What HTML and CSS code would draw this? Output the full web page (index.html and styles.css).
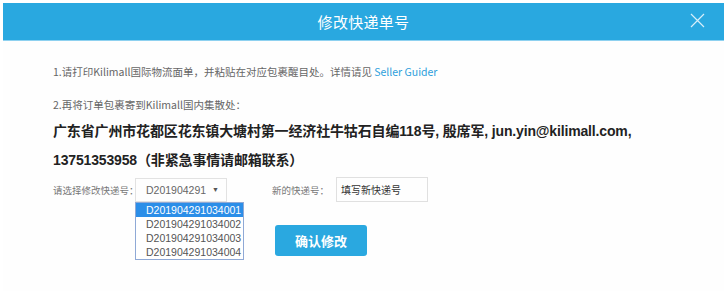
FILE: index.html
```html
<!DOCTYPE html>
<html lang="zh-CN">
<head>
<meta charset="utf-8">
<title>修改快递单号</title>
<link rel="stylesheet" href="styles.css">
</head>
<body>
<div class="dialog">
  <div class="header">
    <span class="title">修改快递单号</span>
    <span class="close" aria-label="关闭">
      <svg width="15" height="15" viewBox="0 0 15 15"><path d="M1 1L14 14M14 1L1 14" stroke="#d6eefa" stroke-width="1.2" fill="none"/></svg>
    </span>
  </div>
  <div class="body">
    <p class="step step1">1.请打印Kilimall国际物流面单，并粘贴在对应包裹醒目处。详情请见 <a class="link">Seller Guider</a></p>
    <p class="step step2">2.再将订单包裹寄到Kilimall国内集散处：</p>
    <div class="address">
      <div>广东省广州市花都区花东镇大塘村第一经济社牛牯石自编118号, 殷席军, jun.yin@kilimall.com,</div>
      <div>13751353958（非紧急事情请邮箱联系）</div>
    </div>
    <div class="form-row">
      <div class="field field-select">
        <span class="label">请选择修改快递号：</span>
        <div class="select">
          <span class="select-text">D201904291034001</span>
          <span class="arrow">▼</span>
          <ul class="options">
            <li class="selected">D201904291034001</li>
            <li>D201904291034002</li>
            <li>D201904291034003</li>
            <li>D201904291034004</li>
          </ul>
        </div>
      </div>
      <div class="field field-input">
        <span class="label">新的快递号：</span>
        <div class="input">填写新快递号</div>
      </div>
    </div>
    <div class="btn-row">
      <button class="btn">确认修改</button>
    </div>
  </div>
</div>
</body>
</html>
```

FILE: styles.css
```css
* { box-sizing: border-box; }
html, body { margin: 0; padding: 0; background: #ffffff; }
body {
  width: 727px;
  height: 291px;
  overflow: hidden;
  font-family: "Noto Sans", "Noto Sans CJK SC", sans-serif;
  color: #555;
}
.dialog { padding: 3px 3px 0 3px; }
.header {
  height: 38px;
  background: #29a8e0;
  border-bottom: 1px solid #8ed1f0;
  display: flex;
  align-items: center;
  justify-content: center;
  position: relative;
}
.title {
  color: #ffffff;
  font-size: 15px;
  font-family: "Noto Sans CJK SC", sans-serif;
  letter-spacing: 0.3px;
}
.close {
  position: absolute;
  right: 19px;
  top: 10px;
  width: 15px;
  height: 15px;
  display: block;
}
.close svg { display: block; }
.body {
  padding: 21px 0 0 50px;
  background: #fefefe;
  height: 250px;
}
.step {
  margin: 0;
  font-size: 10.5px;
  line-height: 20px;
  color: #666;
  font-family: "Noto Sans CJK SC", sans-serif;
  white-space: nowrap;
}
.step2 { margin-top: 13px; }
.link { color: #2d9fdc; }
.address {
  margin-top: 2px;
  font-size: 14px;
  line-height: 29px;
  font-weight: bold;
  color: #222;
  font-family: "Liberation Sans", "Noto Sans CJK SC", sans-serif;
  letter-spacing: -0.15px;
  white-space: nowrap;
}
.form-row {
  margin-top: 2px;
  display: flex;
  align-items: center;
  height: 25px;
}
.field { display: flex; align-items: center; }
.label {
  font-size: 9.5px;
  color: #777;
  font-family: "Noto Sans CJK SC", sans-serif;
  white-space: nowrap;
}
.field-select .label { width: 82px; flex-shrink: 0; }
.select {
  position: relative;
  width: 92px;
  height: 24px;
  border: 1px solid #e2e2e2;
  display: flex;
  align-items: center;
  padding-left: 10px;
  font-family: "Liberation Sans", sans-serif;
  font-size: 10.5px;
  color: #666;
  flex-shrink: 0;
}
.select-text {
  width: 60px;
  overflow: hidden;
  white-space: nowrap;
  flex-shrink: 0;
}
.arrow {
  font-size: 7px;
  color: #555;
  margin-left: 6px;
}
.options {
  position: absolute;
  left: -1px;
  top: 23px;
  margin: 0;
  padding: 0;
  list-style: none;
  width: 109px;
  border: 1px solid #8fa9d6;
  background: #ffffff;
  font-size: 10.5px;
  z-index: 2;
}
.options li {
  height: 14px;
  line-height: 14px;
  padding-left: 10px;
  color: #555;
  white-space: nowrap;
}
.options li.selected { background: #2b8ee8; color: #ffffff; }
.field-input { margin-left: 45px; }
.field-input .label { width: 64px; }
.input {
  width: 92px;
  height: 25px;
  border: 1px solid #e0e0e0;
  font-size: 10px;
  line-height: 23px;
  padding-left: 4px;
  color: #333;
  font-family: "Noto Sans CJK SC", sans-serif;
}
.btn-row {
  margin-top: 23px;
  padding-left: 222px;
}
.btn {
  width: 92px;
  height: 31px;
  border: none;
  border-radius: 3px;
  background: #2aa8e0;
  color: #ffffff;
  font-size: 13px;
  font-weight: bold;
  font-family: "Noto Sans CJK SC", sans-serif;
  padding: 0;
}
```
